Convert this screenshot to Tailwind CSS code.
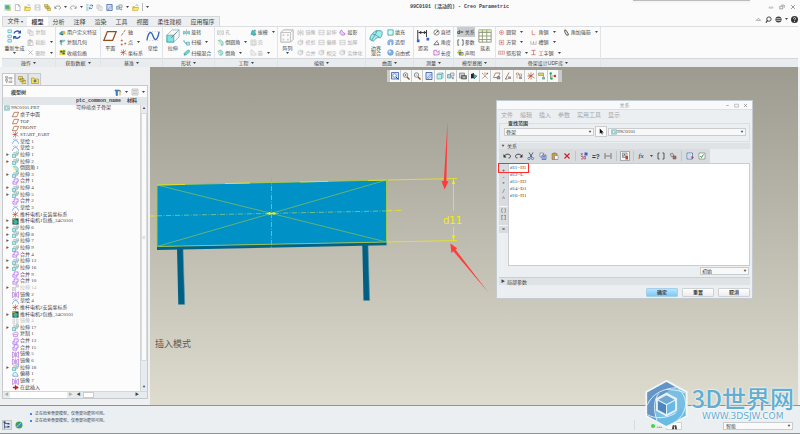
<!DOCTYPE html>
<html lang="zh-CN">
<head>
  <meta charset="UTF-8" />
  <meta name="viewport" content="width=device-width, initial-scale=1.0"/>
  <title>99C0101 (活动的) - Creo Parametric</title>
  <script src="https://cdn.jsdelivr.net/npm/@tailwindcss/browser@4"></script>
</head>
<body class="h-screen flex flex-col overflow-hidden bg-[#fbfbfc] text-[#444] text-[5px] leading-[6px] font-['Liberation_Sans','Noto_Sans_CJK_SC',sans-serif]">

  <!-- title bar -->
  <header class="relative flex items-center h-[14px] shrink-0 px-1">
    <div id="quickBar" class="flex items-center gap-[3px]"></div>
    <h1 class="absolute left-[410px] top-1 font-['Liberation_Mono','Noto_Sans_CJK_SC',monospace] font-bold whitespace-pre">99C0101 (活动的) - Creo Parametric</h1>
    <div class="absolute right-[50px] top-0 w-[117px] h-px bg-[#bbb] shadow"></div>
    <div id="windowButtons" class="ml-auto flex gap-[5px]"></div>
  </header>

  <!-- ribbon tabs -->
  <div class="flex items-end h-3 shrink-0 px-0.5">
    <nav id="tabs" class="flex w-[218px] h-[10px] text-[6px] bg-[#eceef0] border border-b-0 border-[#d5d8da]"></nav>
    <div id="helpButtons" class="ml-auto flex items-center gap-[3px] h-full pb-0.5"></div>
  </div>

  <!-- ribbon -->
  <div id="ribbon" class="flex h-[41px] shrink-0 mx-0.5 border-t border-[#dcdfe1]"></div>

  <main class="flex flex-1 min-h-0 bg-[#eef0f2] pr-0.5">
    <!-- model tree -->
    <aside class="w-[148px] shrink-0 flex flex-col pl-0.5 pt-1.5 pb-1.5 mr-0.5">
      <div id="treeTabs" class="flex h-3 shrink-0"></div>
      <section class="flex-1 min-h-0 flex flex-col border border-[#c6cacd] bg-[#fcfcfc]">
        <div class="flex items-center h-[11px] shrink-0 pl-2 pr-0.5">
          <h2 class="font-bold">模型树</h2>
          <div id="treeTools" class="ml-auto flex items-center gap-[3px]"></div>
        </div>
        <div class="flex items-center h-2 shrink-0 bg-[#e3e6e9] font-bold font-['Liberation_Mono','Noto_Sans_CJK_SC',monospace]">
          <span class="ml-[73px]">ptc_common_name</span><span class="ml-1.5">材料</span>
        </div>
        <div class="flex flex-1 min-h-0">
          <ul id="tree" class="flex-1 grid auto-rows-fr overflow-hidden font-['Liberation_Serif','Noto_Sans_CJK_SC',serif]"></ul>
          <div class="w-[7px] flex flex-col bg-[#e8ebed] border-l border-[#d4d7d9]">
            <span class="h-2 text-center text-[4px]">▲</span>
            <span class="flex-1 bg-[#fafafa] border border-[#d8dbdd] flex items-center justify-center text-[#bbb]">≡</span>
            <span class="h-[23px]"></span>
            <span class="h-[7px] text-center text-[4px]">▼</span>
          </div>
        </div>
        <div class="flex h-[7px] shrink-0 items-center bg-[#e8ebed] text-[4px] leading-[6px] border-t border-[#d4d7d9]">
          <span class="w-[7px] text-center text-[#aaa]">◀</span>
          <span class="w-[57px] h-full bg-white"></span>
          <span class="w-[7px] text-center text-[#aaa]">▶</span>
          <span class="w-[9px] text-center">◀</span>
          <span class="w-[11px] h-1.5 bg-white border border-[#ccc]"></span>
          <span class="ml-auto mr-2">▶</span>
        </div>
      </section>
    </aside>

    <!-- graphics window -->
    <div class="relative flex-1 min-w-0 overflow-hidden bg-linear-to-b from-[#9d9a8f] to-[#dedbcf] pt-[3px]">
      <div id="viewBar" class="relative z-10 mx-auto flex w-[175px] h-3 bg-[#c9cccd] px-[3px] gap-px"></div>

      <svg class="absolute left-0 top-0" width="648" height="339" viewBox="150 67 648 339">
        <polygon points="177,248 183,248 184.7,304.5 178.3,304.5" fill="#006084"/>
        <path d="M183 248l1.7 56.5" stroke="#4f93ab" stroke-width=".6"/>
        <polygon points="362.3,244 368,244 369.6,300.5 363.5,300.5" fill="#006084"/>
        <path d="M368 244l1.6 56.5" stroke="#4f93ab" stroke-width=".6"/>
        <polygon points="157,246.5 386.5,242 386.5,245.3 157,250" fill="#00648a"/>
        <polygon points="157,185 386.5,180 386.5,242 157,246.5" fill="#0091c6"/>
        <g fill="none" stroke="#a9c94a" stroke-width=".9">
          <polygon points="157,185 386.5,180 386.5,242 157,246.5"/>
          <path d="M157 185L386.5 242M157 246.5L386.5 180" stroke="#6db86c"/>
          <path d="M271.5 177V248" stroke-dasharray="5 1.5 1 1.5" stroke="#7cc48c"/>
          <path d="M157 215.8L386.5 210.9" stroke-dasharray="5 1.5 1 1.5" stroke="#7cc48c"/>
        </g>
        <g fill="none" stroke="#e6e32c" stroke-width=".9">
          <path d="M150 216h7M387 210.8l15-.4" stroke-dasharray="5 1.5 1 1.5"/>
          <path d="M157 185L250 183M300 182L386.5 180" stroke-dasharray="28 40"/>
          <path d="M388 180L457 178.5M387 242L457 240.5M453.5 179V211M453.5 227V240.5"/>
          <path d="M267 213.5h9M268.5 212.2l6 2.4M268.5 214.8l6-2.4" stroke="#fff200"/>
        </g>
        <path d="M453.5 179l1.5 5h-3zM453.5 240.5l1.5-5h-3z" fill="#fff000"/>
        <text x="443" y="224" font-size="10" fill="#f4f000" font-family="DejaVu Sans">d11</text>
        <path d="M447.6 121l-1.2 60 2.1.2-3.8 8.3-3.2-8.6 2.3.1z" fill="#ff3b3b"/>
        <path d="M488 292l-34.6-40.8-1.9 1.7-1.2-9.5 6.9 4.8-1.7 1.4z" fill="#ff3b3b"/>
        <text x="155" y="347" font-size="9" fill="#5a5a55" font-family="Noto Sans CJK SC">插入模式</text>
      </svg>

      <!-- relations dialog -->
      <section role="dialog" aria-label="关系" class="absolute z-10 left-[346px] top-[33px] w-[257px] h-[199px] flex flex-col bg-[#eceff1] border border-[#c3cad0] px-0.5">
        <div class="relative flex items-center justify-center h-[9px] shrink-0 -mx-0.5 bg-[#f8f9fa] text-[#999] border-b border-[#dde0e3]">
          <span>关系</span>
          <div id="dialogButtons" class="absolute right-1 flex gap-1"></div>
        </div>
        <div id="dialogMenu" class="flex items-center gap-[7px] h-[10px] shrink-0 pl-0.5 text-[6px] text-[#a4a7aa]"></div>
        <fieldset class="h-5 shrink-0 border border-[#dcdfe2] flex items-center pl-1 pr-[3px] pt-px mt-0.5">
          <legend class="font-bold ml-1 leading-[3px]">查找范围</legend>
          <div class="relative w-[90px] h-2 border border-[#c9cdd0] bg-[#f8f8f8]">
            <select aria-label="查找范围" class="appearance-none block w-full h-full pl-px leading-[6px]"><option>骨架</option></select>
            <span class="absolute right-px top-0 text-[4px] pointer-events-none">▼</span>
          </div>
          <button id="pickButton" aria-label="选择" class="w-3 h-[11px] mx-px flex items-center justify-center bg-[#f9f9f9] border border-[#ccc]"></button>
          <div class="relative flex-1 h-2 border border-[#c9cdd0] bg-[#f8f8f8] flex items-center pl-0.5">
            <span id="partIcon"></span>
            <select aria-label="对象" class="appearance-none block flex-1 h-full leading-[6px] font-['Liberation_Serif',serif]"><option>99C0101</option></select>
            <span class="absolute right-px top-0 text-[4px] pointer-events-none">▼</span>
          </div>
        </fieldset>
        <h3 class="flex items-center h-1.5 shrink-0 mt-px bg-[#dfe3e5]"><span class="text-[4px] w-2 text-center">▼</span>关系</h3>
        <div id="dialogTools" class="flex items-center self-start h-[14px] shrink-0 w-[211px] pl-1 gap-1 bg-[#d9dcde]"></div>
        <div class="flex flex-1 min-h-0">
          <div id="operators" class="w-[9px] self-start flex flex-col pt-1 bg-[#d9dcde] font-['Liberation_Mono',monospace]"></div>
          <textarea aria-label="关系式" spellcheck="false" class="flex-1 resize-none bg-white border border-[#c9cdd0] pl-px text-[5px] leading-[7px] font-['Liberation_Serif',serif] outline-none">d11=H1
d12=L
d15=H2
d14=D1
d16=H1</textarea>
        </div>
        <div class="relative self-end w-[49px] h-2 shrink-0 mt-px mr-px border border-[#c9cdd0] bg-[#f8f8f8]">
          <select aria-label="执行" class="appearance-none block w-full h-full pl-px leading-[6px]"><option>初始</option></select>
          <span class="absolute right-px top-0 text-[4px] pointer-events-none">▼</span>
        </div>
        <h3 class="flex items-center h-2 shrink-0 mt-0.5 bg-[#dfe3e5] border-t border-[#cbcfd2]"><span class="text-[4px] w-2 text-center">▶</span>局部参数</h3>
        <div class="flex justify-end items-center gap-1 h-[13px] pt-px shrink-0 font-bold">
          <button class="w-8 h-[9px] rounded-[1px] border border-[#a8d0ea] bg-linear-to-b from-[#b8e3fd] to-[#7cc8f8]">确定</button>
          <button class="w-8 h-[9px] rounded-[1px] border border-[#cfd2d4] bg-linear-to-b from-white to-[#ececec]">重置</button>
          <button class="w-8 h-[9px] rounded-[1px] border border-[#cfd2d4] bg-linear-to-b from-white to-[#ececec]">取消</button>
        </div>
        <div class="absolute left-px top-[62px] w-[31px] h-[10px] border border-[#ff2d2d]"></div>
      </section>
    </div>
  </main>

  <!-- status bar -->
  <footer class="flex h-[28px] shrink-0 border-t border-[#8f9294] bg-[#eceff2] px-0.5">
    <div id="statusIcons" class="flex items-end gap-0.5 pb-[3px]"></div>
    <ul class="ml-1.5 pt-1 text-[4px] leading-[7px] text-[#444]">
      <li class="flex items-center gap-[3px]"><i class="size-[2px] rounded-full bg-blue-600"></i>正在检索骨架模型，仅骨架功能将可用。</li>
      <li class="flex items-center gap-[3px]"><i class="size-[2px] rounded-full bg-blue-600"></i>正在检索骨架模型，仅骨架功能将可用。</li>
    </ul>
    <div class="ml-auto flex items-end pb-[3px]">
      <span class="w-px h-[10px] bg-[#d8dbde] mr-4"></span>
      <span class="relative z-30 size-1 rounded-full bg-[#3fd63f] mb-0.5"></span>
      <span class="relative z-30 text-[#999] ml-0.5">•••</span>
      <button id="findButton" aria-label="查找" class="ml-1 w-4 h-2 flex items-center justify-center bg-[#fafafa] border border-[#d0d3d5]"></button>
      <div class="relative w-[70px] h-2 ml-[41px] mr-[5px] border border-[#c9cdd0] bg-[#fafafa]">
        <select aria-label="选择过滤器" class="appearance-none block w-full h-full pl-0.5 leading-[6px]"><option>智能</option></select>
        <span class="absolute right-px top-0 text-[4px] pointer-events-none">▼</span>
      </div>
    </div>
  </footer>
  <div class="h-px shrink-0 bg-[#8f9294]"></div>

  <!-- site mark -->
  <div class="absolute z-20 right-[6px] bottom-[6px] flex items-center gap-[3px] pointer-events-none text-[#62aed3]">
    <svg width="45" height="48" viewBox="0 0 46 50">
      <path d="M23 1L44 12.5V37.500L23 49 2 37.500V12.500z" fill="#79bfe4" stroke="#f4f7f8" stroke-width="2"/>
      <path d="M23 2L3 13v24l10 5.500C9 28 13 15 33 8z" fill="#6595c6"/>
      <path d="M3 37l20 11 20-11-4-8c-6 8-18 10-26 13z" fill="#6abbe6"/>
      <path d="M3 26C8 14 20 9 33 8M13 42.500C9 30 10 20 15 14M23 48c12-4 18-11 20-22M43 14c-3-2-10-4-20-4M43 26c0-6-2-12-8-17M3 36c8 5 22 4 30-2" fill="none" stroke="#dfeef5" stroke-width="1"/>
      <path d="M23 13l11 6v13l-11 6-11-6V19z" fill="#e6f1f6"/>
      <path d="M23 16l8.500 4.500L23 25l-8.500-4.500z" fill="#6ea9d6"/>
      <path d="M14 21.500l8.500 4.500v9.500L14 31z" fill="#4f86bd"/>
      <path d="M32 21.500L23.500 26v9.500L32 31z" fill="#69b9e4"/>
    </svg>
    <div class="pb-1 text-center [text-shadow:0_0_2px_#fff,0_0_2px_#fff]">
      <div class="text-[24px] leading-[28px] font-medium font-['Noto_Sans_CJK_SC',sans-serif]">3D世界网</div>
      <div class="text-[9px] leading-[8px] font-['DejaVu_Sans',sans-serif]"><a href="#">WWW.3DSJW.COM</a></div>
    </div>
  </div>

  <script>
    // icon shapes, all on a 16x16 grid
    const shapes = {
      app: '<path d="M1 1h14v14H1z" fill="#a8d6cf"/><path d="M3 3h8v8H3z" fill="#55a7a4"/><path d="M7 7h8v8H7z" fill="#d6c04c"/><path d="M6 5h6v6H6z" fill="#58b44c"/>',
      page: '<path d="M3 1h7l4 4v10H3z" fill="#fff" stroke="#777"/><path d="M10 1v4h4" fill="none" stroke="#777"/>',
      open: '<path d="M1 5h5l2 2h6v8H1z" fill="#d9b93c"/><path d="M4 8h12l-3 7H1z" fill="#ffe66b" stroke="#a8892a" stroke-width=".7"/><path d="M8 3c3-2 5-1 6 2" fill="none" stroke="#4a9" stroke-width="1.500"/>',
      save: '<path d="M2 2h12v12H2z" fill="#ddd" stroke="#bbb"/><path d="M5 2h6v5H5zM4 9h8v5H4z" fill="#f6f6f6" stroke="#c4c4c4" stroke-width=".6"/>',
      stack: '<path d="M1 1h8v6H1zM4 5h8v6H4zM8 9h8v6H8z" fill="#f2dc5a" stroke="#776b2a" stroke-width=".9"/>',
      undo: '<path d="M3 8c2-5 12-5 12 1 0 2-2 3-4 3" fill="none" stroke="#888" stroke-width="2"/><path d="M1 4v7h6z" fill="#888"/>',
      redo: '<path d="M13 8C11 3 1 3 1 9c0 2 2 3 4 3" fill="none" stroke="#999" stroke-width="2"/><path d="M15 4v7H9z" fill="#999"/>',
      undoDark: '<path d="M3 8c2-5 12-5 12 1 0 2-2 3-4 3" fill="none" stroke="#333" stroke-width="1.800"/><path d="M1 4v7h6z" fill="#333"/>',
      redoDark: '<path d="M13 8C11 3 1 3 1 9c0 2 2 3 4 3" fill="none" stroke="#333" stroke-width="1.800"/><path d="M15 4v7H9z" fill="#333"/>',
      regen: '<path d="M1 1h4v3H1zM1 7h4v3H1zM1 12h4v3H1z" fill="#d8f2f6" stroke="#3aa7b8" stroke-width=".7"/><path d="M8 5a4 4 0 017-1M15 8a4 4 0 01-7 1" fill="none" stroke="#2858b8" stroke-width="1.600"/><path d="M16 1v4h-4zM7 12V8h4z" fill="#2858b8"/>',
      copy: '<path d="M2 2h7v8H2z" fill="#eee" stroke="#aaa"/><path d="M6 6h8v9H6z" fill="#f8f8f8" stroke="#aaa"/><path d="M8 9h4M8 12h4" stroke="#bbb"/>',
      copyC: '<path d="M2 2h7v8H2z" fill="#e6eeff" stroke="#557"/><path d="M6 6h8v9H6z" fill="#aac8ff" stroke="#336"/><path d="M8 9h4M8 12h4" stroke="#346"/>',
      paste: '<path d="M2 3h10v12H2z" fill="#ddd" stroke="#aaa"/><path d="M5 1h4v3H5z" fill="#aaa"/><path d="M7 7h7v8H7z" fill="#f8f8f8" stroke="#aaa"/>',
      pasteC: '<path d="M2 3h10v12H2z" fill="#c9a046" stroke="#765"/><path d="M5 1h4v3H5z" fill="#888"/><path d="M7 7h7v8H7z" fill="#fff" stroke="#667"/>',
      cross: '<path d="M3 3l10 10M13 3L3 13" stroke="#aaa" stroke-width="1.600"/>',
      crossR: '<path d="M3 3l10 10M13 3L3 13" stroke="#c9211e" stroke-width="2.200"/>',
      udf: '<path d="M1 9l6-5 7 2-5 6z" fill="#33a1c9"/><path d="M7 4l7 2 1 5-6 3z" fill="#e2b52e"/><path d="M1 9l8 3v3l-8-3z" fill="#1c6e98"/>',
      geo: '<path d="M3 3h11l-4 4H6v7l-3-3z" fill="#8be3e8" stroke="#2a8d95"/><path d="M1 5l5-3v6z" fill="#cc3a2a"/>',
      shrink: '<path d="M1 2h14v12H1z" fill="#f4d93e"/><path d="M3 4h5v4H3zM8 8h5v4H8z" fill="#20587a"/><path d="M9 3h5v4H9z" fill="#3a9d5a"/>',
      plane: '<path d="M5 3h10l-4 10H1z" fill="#fff" stroke="#9a4a1f" stroke-width="1.500"/>',
      axis: '<path d="M3 15L13 1" stroke="#a4552a" stroke-width="1.800" stroke-dasharray="7 2"/>',
      point: '<path d="M4 1v5M1.500 3.500h5M12 8v5M9.500 10.500h5M4 10v5M1.500 12.500h5" stroke="#a4552a" stroke-width="1.500"/>',
      csys: '<path d="M8 8V1M8 8l6-5M8 8l7 4M8 8v7M8 8l-6 6M8 8L2 3M1 8h7" stroke="#a4552a" stroke-width="1.300"/><path d="M8 8l5-4M8 8H3" stroke="#d23" />',
      sketch: '<path d="M1 13C3 2 6 2 8 8s5 6 7-5" fill="none" stroke="#2f62b8" stroke-width="1.500"/><path d="M1 3h14M1 13h14" stroke="#9db9e0" stroke-dasharray="1 2"/>',
      sketchS: '<path d="M1 13C4 3 12 3 15 13" fill="none" stroke="#4a8ade" stroke-width="1.600"/><path d="M2 4l4-2 4 2 4-2" fill="none" stroke="#4a8ade"/>',
      extrude: '<path d="M1 7h8v8H1z" fill="#7fe6e4" stroke="#2a9ba0"/><path d="M1 7l6-6h8L9 7zM15 1v8l-6 6V7z" fill="#f1fafa" stroke="#8ab" stroke-width=".8"/><path d="M6 10l6-6" stroke="#777"/>',
      extrudeS: '<path d="M1 8h7v7H1z" fill="#b4ecea" stroke="#2a8388"/><path d="M8 11h4V5M9 2h6v5H9z" fill="#e5f7f7" stroke="#47868a"/><path d="M4 6V4h3" fill="none" stroke="#555"/>',
      extrudeG: '<path d="M1 8h7v7H1zM9 2h6v5H9z" fill="#ddd" stroke="#aaa"/>',
      revolve: '<path d="M8 1v14" stroke="#555" stroke-dasharray="3 1"/><path d="M1 5l5 1v4l-5 2zM15 5l-5 1v4l5 2z" fill="#7cdfe0" stroke="#298"/>',
      sweep: '<path d="M2 3c1 7 5 8 12 7" fill="none" stroke="#2a8d95" stroke-width="2"/><path d="M8 7h7v7H8z" fill="#9be9e6" stroke="#2a8d95"/>',
      blend: '<path d="M2 10l4 4 9-7-1-5-5 2z" fill="#6fd3d2" stroke="#298" /><path d="M2 10l4 4-4 1z" fill="#298"/>',
      hole: '<path d="M1 4h4v9H1zM11 4h4v9h-4z" fill="#eee" stroke="#aaa"/><path d="M8 2v13" stroke="#aaa" stroke-dasharray="2 1"/>',
      round: '<path d="M2 4l6-2 6 5v7l-4 1-2-6z" fill="#a8ece8" stroke="#4a9b98"/><path d="M2 4l6 5v6l-6-4z" fill="#f6f2b4"/>',
      chamfer: '<path d="M2 5l7-3 5 6-3 6H6z" fill="#9fe4e0" stroke="#4a9b98"/><path d="M2 5l6 5-2 4z" fill="#f0e89c"/>',
      draft: '<path d="M2 12l3-9 5 2 4 8-5 2z" fill="#48bfc2" stroke="#277" /><path d="M9 2l5 3" stroke="#277" stroke-width="2"/>',
      shell: '<path d="M2 2h12v12H2zM5 5h6v9H5z" fill="#eee" stroke="#bbb"/>',
      rib: '<path d="M2 14V2h3l9 9v3z" fill="#eee" stroke="#bbb"/>',
      pattern: '<path d="M1 4l3-3h11v11l-3 3H1z" fill="#fafafa" stroke="#aaa"/><path d="M12 4V15M1 4h11l3-3" fill="none" stroke="#bbb"/><path d="M3 6h2v2H3zM8 6h2v2H8zM3 11h2v2H3zM8 11h2v2H8z" fill="#ccc"/>',
      mirror: '<path d="M8 1v14" stroke="#888" stroke-dasharray="2 1"/><path d="M2 3l4 3v5l-4 3zM14 3l-4 3v5l4 3z" fill="#eee" stroke="#aaa"/>',
      mirrorP: '<path d="M8 1v14" stroke="#66a"/><path d="M1 2l5 3v7l-5 3zM15 2l-5 3v7l5 3z" fill="#f2e4fc" stroke="#a45bd8" stroke-width="1.300"/>',
      greyBox: '<path d="M2 3h12v10H2z" fill="#f4f4f4" stroke="#aaa"/><path d="M2 8h12" stroke="#bbb"/>',
      greySurf: '<path d="M2 6l5-4 7 2-2 8-5 2-5-3z" fill="#eee" stroke="#aaa"/><path d="M7 6h5v6" fill="none" stroke="#aaa"/>',
      project: '<path d="M2 9c1-8 5-7 6-3s6 2 6 6c-4 3-9 3-12-3z" fill="#f0d8fb" stroke="#a23bd6" stroke-width="1.500"/>',
      merge: '<path d="M5 2h9v7h-3v5H2V8h3z" fill="#f6ebff" stroke="#a45bf0" stroke-width="1.500"/><path d="M5 9c2 2 5 1 6-1" fill="none" stroke="#a45bf0"/>',
      copyP: '<path d="M2 6c3-5 11-5 12 0l-2 7H4z" fill="#f6e6ff" stroke="#a45bd8" stroke-width="1.300"/><path d="M4 8h8" stroke="#a45bd8"/>',
      offset: '<path d="M2 12V7c2-5 8-5 10 0l2 5z" fill="#e6f4ff" stroke="#3b8ad6" stroke-width="1.400"/>',
      boundary: '<path d="M1 12C1 7 5 4 8 2h6c2 2 1 6-1 8-3-1-6 1-8 4z" fill="#9deef0" stroke="#4a9aa0"/><path d="M4 6c3 0 6 2 8 4M9 2c-1 4-4 7-6 11" fill="none" stroke="#4a9aa0"/>',
      fill: '<path d="M2 2h12v12H2z" fill="#d9f8f8" stroke="#2ba6a8" stroke-width="1.800"/>',
      style: '<path d="M2 13V5c3-4 8-4 12-2v9l-3 2V6c-2-1-4 0-5 1v6z" fill="#9dc5f3" stroke="#3b6fb8"/>',
      sphere: '<circle cx="8" cy="8" r="6.500" fill="#7fb4ea" stroke="#4a7bb8"/><circle cx="6" cy="6" r="2.500" fill="#e3f1ff"/>',
      distance: '<path d="M2 1v12M12 1v8M3 4h8" stroke="#444" stroke-width="1.200"/><path d="M3 4l3-2v4zM12 4L9 2v4z" fill="#333"/><path d="M1 12h3v3H1zM12 10h3v3h-3z" fill="#2a62d8"/>',
      diameter: '<circle cx="8" cy="8" r="6" fill="none" stroke="#444" stroke-width="1.300"/><path d="M4 12l8-8" stroke="#444" stroke-width="1.300"/><path d="M12 4l-4 1 3 3z" fill="#444"/>',
      angle: '<path d="M2 13L10 3M2 13h12M9 6c3 2 4 4 3 7" fill="none" stroke="#333" stroke-width="1.500"/>',
      length: '<path d="M2 14V3h6c0 5 3 5 6 1v9z" fill="#fbe9fb" stroke="#a236b8" stroke-width="1.300"/>',
      relation: '<text x="0" y="12" font-size="12" font-weight="bold" fill="#333" font-family="Liberation Sans">d=</text>',
      param: '<path d="M5 2H2v12h3M11 2h3v12h-3" fill="none" stroke="#333" stroke-width="1.600"/>',
      declare: '<path d="M1 9l4-7h4v8z" fill="#e4d83b" stroke="#886"/><path d="M5 8h9v6H5z" fill="#59b" stroke="#246"/><circle cx="12" cy="12" r="3" fill="#e7c22c"/>',
      table: '<path d="M1 1h14v14H1z" fill="#fffef2" stroke="#8a8a7a"/><path d="M1 1h14v3H1z" fill="#d8e4b4"/><path d="M1 4h14M1 8h14M1 12h14M5 1v14M10 1v14" stroke="#8a9a7a"/>',
      tubeC: '<circle cx="8" cy="8" r="5" fill="#fdeaea" stroke="#b55"/><path d="M8 5v6M5 8h6" stroke="#d44"/>',
      tubeS: '<path d="M3 3h10v10H3z" fill="#fdeaea" stroke="#a66"/><path d="M6 6h4v4H6z" fill="#d66"/>',
      tubeR: '<path d="M1 5h14v7H1z" fill="#fdeaea" stroke="#a66"/><path d="M5 6v5M10 6v5" stroke="#d44"/>',
      steelL: '<path d="M5 3v10h7" fill="none" stroke="#d55" stroke-width="1.500"/>',
      steelU: '<path d="M2 4v8h12V4" fill="none" stroke="#999" stroke-width="1.300"/><path d="M6 9h4M8 5v5" stroke="#d44"/>',
      steelI: '<path d="M3 3h10M3 13h10M8 3v10" stroke="#c55" stroke-width="1.500"/>',
      brace: '<path d="M4 2l3 1 5 8v3H8L4 7z" fill="#eee" stroke="#222" stroke-width="1.600"/>',
      lensP: '<circle cx="7" cy="6" r="4.500" fill="#fff" stroke="#555" stroke-width="1.300"/><path d="M5 6h4M7 4v4" stroke="#333"/><path d="M10 10l5 5" stroke="#8a4a22" stroke-width="2.500"/>',
      lensM: '<circle cx="7" cy="6" r="4.500" fill="#fff" stroke="#555" stroke-width="1.300"/><path d="M5 6h4" stroke="#333"/><path d="M10 10l5 5" stroke="#8a4a22" stroke-width="2.500"/>',
      lensBox: '<path d="M1 1h14v13H1z" fill="#d6e4fb" stroke="#2d55a8" stroke-width="1.500"/><circle cx="7" cy="7" r="3.500" fill="#fff" stroke="#345"/><path d="M10 10l5 5" stroke="#345" stroke-width="2"/>',
      repaint: '<path d="M2 1h12v14H2z" fill="#d6e4fb" stroke="#2d55a8" stroke-width="1.600"/><path d="M5 12l6-8 2 2-6 7z" fill="#fff" stroke="#2d55a8"/>',
      cube: '<path d="M2 5l3-3h9v9l-3 3H2z" fill="#bdeff0" stroke="#3c8c90"/><path d="M2 5h9v9M11 5l3-3" fill="none" stroke="#3c8c90"/>',
      views: '<path d="M1 5h7v7H1z" fill="#9ddfe2" stroke="#467"/><path d="M7 2h7v6H7z" fill="#e3e3e3" stroke="#666"/><path d="M9 11h5l-2 4z" fill="#667"/>',
      camera: '<path d="M1 2h10v10H1z" fill="#ccc" stroke="#555"/><path d="M5 7h10v7H5z" fill="#888" stroke="#333"/><circle cx="10" cy="10.500" r="2.500" fill="#eee" stroke="#333"/>',
      spin: '<path d="M2 4l6-2v10l-6 1z" fill="#223" /><path d="M7 5l7 3-6 6z" fill="#49b6bb" stroke="#244"/>',
      datum: '<path d="M2 2l12 12M14 2L2 14M8 1v5" stroke="#9b5026" stroke-width="1.300" stroke-dasharray="3 1"/><path d="M10 3l4-2v4z" fill="#777"/>',
      datumPl: '<path d="M5 2h9l-4 9H1z" fill="#fff" stroke="#9b5026" stroke-width="1.300"/><path d="M8 9h6v5H8z" fill="#999" stroke="#555" stroke-width=".7"/>',
      datumAx: '<path d="M3 14L10 1M2 14h5" stroke="#9b5026" stroke-width="1.500"/><path d="M8 9h6v5H8z" fill="#999"/>',
      datumPt: '<path d="M3 2h4v4H3zM9 4h4v4H9z" fill="#fff" stroke="#9b5026"/><path d="M8 9h6v5H8z" fill="#999"/><path d="M4 8v5" stroke="#9b5026"/>',
      annot: '<path d="M1 2h10v5H1z" fill="#d8d858" stroke="#776"/><path d="M11 7v5" stroke="#555"/><path d="M8 10h6v5H8z" fill="#8aa"/>',
      spinC: '<path d="M3 2v12M3 8h10" stroke="#555"/><circle cx="3.500" cy="3" r="2.500" fill="#2cb04c"/><circle cx="12" cy="8" r="2.500" fill="#d33"/><circle cx="5" cy="13" r="2.500" fill="#2cb04c"/>',
      tree: '<path d="M3 2v12M3 4h6M3 12h6" stroke="#888"/><path d="M1 1h4v3H1zM1 7h4v3H1zM9 3h5v3H9zM9 10h5v3H9z" fill="#eee" stroke="#777"/>',
      panel: '<path d="M3 1v14M3 5h7M3 12h7" stroke="#2a4a78" stroke-width="1.500"/><path d="M1 1h4v3H1zM9 4h4v3H9zM9 10h4v3H9z" fill="#2a4a78"/>',
      star: '<path d="M1 4h5l1 2h8v9H1z" fill="#ffe14d" stroke="#8d7a22"/><path d="M8 7v6M5 10h6" stroke="#2657c8" stroke-width="2"/>',
      tools: '<path d="M2 4h9l3 3-3-1H7v9H4V6H2z" fill="#3f8fd0" stroke="#2a5a88"/><path d="M11 5h2v10h-2z" fill="#c9a046"/>',
      list: '<path d="M2 2h12v12H2z" fill="#f2f2f2" stroke="#999"/><path d="M4 5h8M4 8h8M4 11h8" stroke="#999"/>',
      part: '<path d="M1 2h14v12H1z" fill="#b9e8ea" stroke="#4a8a8c"/><path d="M4 5h6v6H4z" fill="#fff" stroke="#3a9a9c"/><path d="M10 11l3-3" stroke="#3a9a9c"/>',
      pack: '<path d="M1 1h14v14H1z" fill="#1f4a42"/><path d="M3 7l5-4 5 3v6l-5 2-5-2z" fill="#39b5a0"/><path d="M1 1h5v4H1z" fill="#d0a640"/>',
      insert: '<path d="M2 8h12M8 3v10" stroke="#c8171a" stroke-width="3"/><path d="M10 4l5 4-5 4z" fill="#c8171a"/>',
      greyMirror: '<path d="M2 2h4v12H2zM10 2h4v12h-4z" fill="#eee" stroke="#bbb"/>',
      cut: '<path d="M4 1l6 10M12 1L6 11" stroke="#335" stroke-width="1.500"/><circle cx="4" cy="13" r="2.300" fill="none" stroke="#2a6fc9" stroke-width="1.500"/><circle cx="11" cy="13" r="2.300" fill="none" stroke="#2a6fc9" stroke-width="1.500"/>',
      dims: '<path d="M2 2l3 5M5 2L2 7M2 9h4v5H2M8 9h3v5H8z" fill="none" stroke="#a2406a" stroke-width="1.300"/><path d="M9 1h6v6H9z" fill="#2f62c8"/>',
      what: '<text x="0" y="13" font-size="13" font-weight="bold" fill="#333" font-family="Liberation Sans">=?</text>',
      span: '<path d="M2 2v12M14 2v12M3 8h10" stroke="#444" stroke-width="1.300"/>',
      sort: '<path d="M3 2h9v9H3z" fill="#ddd" stroke="#555"/><path d="M5 9l2-5 2 5" fill="none" stroke="#333"/><path d="M9 8h5v7H9z" fill="#b8483c"/>',
      fx: '<text x="1" y="12" font-size="14" font-style="italic" fill="#222" font-family="Liberation Serif">fx</text>',
      unit: '<path d="M2 4l5-2 3 5-5 3z" fill="#ccc" stroke="#555"/><path d="M8 8h6v6H8z" fill="#b8685c" stroke="#555"/>',
      exec: '<path d="M2 2h11v12H2z" fill="#fff" stroke="#456bb0" stroke-width="1.500"/><path d="M4 6h7M4 10h9" stroke="#456bb0"/><path d="M11 8l5 3-5 3z" fill="#c33"/>',
      check: '<path d="M2 2h12v12H2z" fill="#fff" stroke="#555"/><path d="M5 8l2 3 4-6" fill="none" stroke="#1f9a3a" stroke-width="2"/>',
      cursor: '<path d="M4 1v12l3-3 2 5 2-1-2-4h4z" fill="#111"/>',
      min: '<path d="M3 8h10v3H3z" fill="none" stroke="#777"/>',
      dash: '<path d="M4 8h8" stroke="#888" stroke-width="2"/>',
      square: '<path d="M2 4h12v9H2z" fill="none" stroke="#888" stroke-width="1.500"/>',
      restore: '<path d="M2 6h8v7H2zM6 3h8v7" fill="none" stroke="#666" stroke-width="1.500"/>',
      close: '<path d="M3 3l10 10M13 3L3 13" stroke="#777" stroke-width="2"/>',
      up: '<path d="M3 10h10L8 5z" fill="none" stroke="#777" stroke-width="1.300"/>',
      search: '<circle cx="9" cy="7" r="5" fill="none" stroke="#333" stroke-width="2"/><path d="M6 10l-4 5" stroke="#333" stroke-width="2.500"/>',
      globe: '<circle cx="8" cy="8" r="7" fill="#444"/><path d="M3 6h10M3 10h10" stroke="#fff" stroke-width="1.500"/>',
      help: '<circle cx="8" cy="8" r="8" fill="#333"/><path d="M5.500 6c0-4 5-3 5-.5S8 7.500 8 10M8 11.500v2" fill="none" stroke="#fff" stroke-width="1.800"/>',
      web: '<circle cx="8" cy="8" r="7" fill="#35a84c"/><path d="M2 11C5 3 10 2 14 4c-1 6-6 9-9 10z" fill="#3d8ad0"/><path d="M2 13L13 3" stroke="#f0c532" stroke-width="2"/>',
      glass: '<path d="M2 14l2-9h3v9zM9 14V5h3l2 9z" fill="#444"/><path d="M6 7h4" stroke="#444" stroke-width="2"/>'
    };

    function icon(name, size = 8) {
      return `<svg class="shrink-0" width="${size}" height="${size}" viewBox="0 0 16 16" aria-hidden="true">${shapes[name]}</svg>`;
    }

    const caret = '<svg class="shrink-0" width="3" height="2" viewBox="0 0 6 4"><path d="M0 0h6L3 4z" fill="#444"/></svg>';

    function fillWith(id, html) {
      document.getElementById(id).innerHTML = html;
    }

    function iconButtons(names, size) {
      return names.map(n => n === "v" ? caret : `<button aria-label="${n}">${icon(n, size)}</button>`).join("");
    }

    fillWith("quickBar", iconButtons(["app", "page", "open", "save", "stack", "undo", "v", "redo", "v", "regen", "copy", "repaint", "views", "v", "open"], 7)
      + '<span class="w-px h-2 bg-[#bbb]"></span>' + caret);
    fillWith("windowButtons", iconButtons(["min", "restore", "close"], 6));
    fillWith("helpButtons", iconButtons(["up", "search", "globe", "v", "help"], 7));
    fillWith("dialogButtons", iconButtons(["dash", "square", "close"], 5));
    fillWith("treeTools", iconButtons(["tools", "v", "list", "v"], 8));
    fillWith("pickButton", icon("cursor", 7));
    fillWith("partIcon", icon("part", 6));
    fillWith("findButton", icon("glass", 7));

    fillWith("statusIcons", ["panel", "web"].map((n, i) =>
      `<button aria-label="${n}" class="size-[10px] flex items-center justify-center ${i ? "" : "border border-[#c2c6c9] bg-[#dfe3e6]"}">${icon(n, 8)}</button>`).join(""));

    fillWith("treeTabs", ["tree", "stack", "star"].map((n, i) =>
      `<button aria-label="${n}" class="w-[13px] flex items-center justify-center border border-b-0 border-[#c6cacd] ${i ? "bg-[#e4e7ea]" : "bg-[#fcfcfc]"}">${icon(n, 8)}</button>`).join(""));

    fillWith("tabs", ["文件", "模型", "分析", "注释", "渲染", "工具", "视图", "柔性建模", "应用程序"].map(t =>
      `<button class="grow whitespace-nowrap px-1 leading-[8px] ${t === "模型" ? "bg-white font-bold" : ""}">${t}${t === "文件" ? '<span class="text-[4px]"> ▾</span>' : ""}</button>`).join(""));

    fillWith("viewBar", ["lensBox", "lensP", "lensM", "repaint", "cube", "views", "camera", "spin", "datum", "datumPl", "datumAx", "datumPt", "csys", "annot", "spinC"].map(n =>
      `<button aria-label="${n}" class="flex-1 flex items-center justify-center bg-[#f7f8f8]">${icon(n, 8)}</button>`).join(""));

    fillWith("dialogMenu", ["文件", "编辑", "插入", "参数", "实用工具", "显示"].map(t => `<button>${t}</button>`).join(""));

    fillWith("dialogTools", ["undoDark", "redoDark", "cut", "copyC", "pasteC", "crossR", "|", "dims", "what", "span", "|", "sort", "|", "fx", "v", "param", "unit", "|", "exec", "check"].map(n =>
      n === "|" ? '<span class="w-px h-[10px] bg-[#c2c5c8]"></span>'
        : n === "v" ? caret
        : `<button aria-label="${n}" class="${n === "sort" ? "bg-[#f4f4f4] outline outline-[#aaa]" : ""}">${icon(n, 8)}</button>`).join(""));

    fillWith("operators", ["+", "-", "*", "/", "^", "", "()", "[]", "", "="].map(o =>
      o ? `<button class="h-[7px] text-center">${o}</button>` : '<span class="h-[5px] border-b border-[#f4f4f4]"></span>').join(""));

    // ribbon groups: big = [icon, caption, has menu], col = rows of [icon, caption, has menu, disabled, pressed]
    const groups = [
      { name: "操作", width: 54, parts: [{ big: ["regen", "重新生成", 1] }, { col: [["copy", "复制", 0, 1], ["paste", "粘贴", 1, 1], ["cross", "删除", 1, 1]] }] },
      { name: "获取数据", width: 45, parts: [{ col: [["udf", "用户定义特征"], ["geo", "复制几何"], ["shrink", "收缩包络"]] }] },
      { name: "基准", width: 62, parts: [{ big: ["plane", "平面"] }, { col: [["axis", "轴"], ["point", "点", 1], ["csys", "坐标系"]] }, { big: ["sketch", "草绘"] }] },
      { name: "形状", width: 52, parts: [{ big: ["extrude", "拉伸"] }, { col: [["revolve", "旋转"], ["sweep", "扫描", 1], ["blend", "扫描混合"]] }] },
      { name: "工程", width: 63, parts: [{ col: [["hole", "孔", 0, 1], ["round", "倒圆角", 1], ["chamfer", "倒角", 1]] }, { col: [["draft", "拔模", 1], ["shell", "壳", 0, 1], ["rib", "筋", 1, 1]] }] },
      { name: "编辑", width: 88, parts: [{ big: ["pattern", "阵列", 1] }, { col: [["mirror", "镜像", 0, 1], ["greySurf", "修剪", 0, 1], ["greySurf", "合并", 0, 1]] }, { col: [["greyBox", "延伸", 0, 1], ["greyBox", "偏移", 0, 1], ["greySurf", "相交", 0, 1]] }, { col: [["project", "投影"], ["greyBox", "加厚", 0, 1], ["greySurf", "实体化", 0, 1]] }] },
      { name: "曲面", width: 48, parts: [{ big: ["boundary", "边界<br>混合"] }, { col: [["fill", "填充"], ["style", "造型"], ["sphere", "自由式"]] }] },
      { name: "测量", width: 40, parts: [{ big: ["distance", "距离"] }, { col: [["diameter", "直径"], ["angle", "角度"], ["length", "长度"]] }] },
      { name: "模型意图", width: 42, parts: [{ col: [["relation", "关系", 0, 0, 1], ["param", "参数"], ["declare", "声明"]] }, { big: ["table", "族表"] }] },
      { name: "骨架设计UDF库", width: 105, parts: [{ col: [["tubeC", "圆管", 1], ["tubeS", "方管", 1], ["tubeR", "矩形管", 1]] }, { col: [["steelL", "角钢", 1], ["steelU", "槽钢", 1], ["steelI", "工字钢", 1]] }, { col: [["brace", "角加强筋", 1]] }] }
    ];

    function ribbonPart(p) {
      if (p.big) {
        const [ic, text, menu] = p.big;
        return `<button class="flex flex-col items-center pt-0.5 gap-px whitespace-nowrap leading-[5px]">${icon(ic, 14)}<span class="mt-0.5">${text}</span>${menu ? caret : ""}</button>`;
      }
      return `<div class="grid grid-rows-3 justify-items-start">${p.col.map(([ic, text, menu, off, on]) =>
        `<button class="flex items-center gap-px whitespace-nowrap ${off ? "text-[#aaa]" : ""} ${on ? "bg-[#c9cccf]" : ""}">${icon(ic, 7)}${text}${menu ? `<span class="ml-[3px]">${caret}</span>` : ""}</button>`).join("")}</div>`;
    }

    fillWith("ribbon", groups.map(g => `
      <section class="shrink-0 flex flex-col border-r border-[#e1e4e6]" style="width:${g.width}px">
        <div class="flex-1 min-h-0 flex justify-around px-px">${g.parts.map(ribbonPart).join("")}</div>
        <button class="h-[9px] flex items-center justify-center gap-0.5 bg-[#e9ecee] border-t border-[#d5d8da] whitespace-nowrap">${g.name}${caret}</button>
      </section>`).join("") + '<div class="flex-1 flex flex-col justify-end"><span class="h-[9px] bg-[#e9ecee] border-t border-[#d5d8da]"></span></div>');

    // model tree: [icon, name, can expand, suppressed]
    const ex = n => ["extrudeS", "拉伸 " + n, 1];
    const rows = [
      ["plane", "桌子中面"], ["plane", "TOP"], ["plane", "FRONT"], ["csys", "START_PART"],
      ["sketchS", "草绘 1"], ["sketchS", "草绘 2"], ex(1), ex(2), ["round", "倒圆角 1"], ex(3), ["merge", "合并 1"],
      ex(4), ex(5), ["merge", "合并 2"], ["sketchS", "草绘 3"], ["csys", "推杆电机1安装坐标系"], ["pack", "推杆电机1包络_34C0101", 1],
      ex(6), ex(8), ex(7), ex(9), ["merge", "合并 4"], ex(13), ex(16), ["merge", "合并 9"], ["merge", "合并 10"],
      ["extrudeG", "拉伸 14", 1, 1], ["mirrorP", "镜像 2"], ["sketchS", "草绘 4"], ["csys", "推杆电机2安装坐标系"], ["pack", "推杆电机2包络_34C0101", 1],
      ["greyMirror", "镜像 4", 0, 1], ex(17), ["copyP", "复制 1"], ["merge", "合并 13"], ["merge", "合并 15"],
      ["mirrorP", "镜像 5"], ["mirrorP", "镜像 6"], ex(18), ["offset", "偏移 1"], ["mirrorP", "镜像 7"], ["insert", "在此插入"]
    ];

    fillWith("tree", `
      <li class="flex items-center min-h-0 pl-px gap-px">${icon("part", 6)}<span class="w-16">99C0101.PRT</span>可伸缩桌子骨架</li>`
      + rows.map(([ic, text, open, off]) => `
      <li class="flex items-center min-h-0 gap-px whitespace-pre ${off ? "text-[#bbb]" : ""}">
        <span class="w-2 pl-[3px] text-[3px] text-[#555]">${open ? "▶" : ""}</span>${icon(ic, 7)}<span>${text}</span>
      </li>`).join(""));
  </script>
</body>
</html>
